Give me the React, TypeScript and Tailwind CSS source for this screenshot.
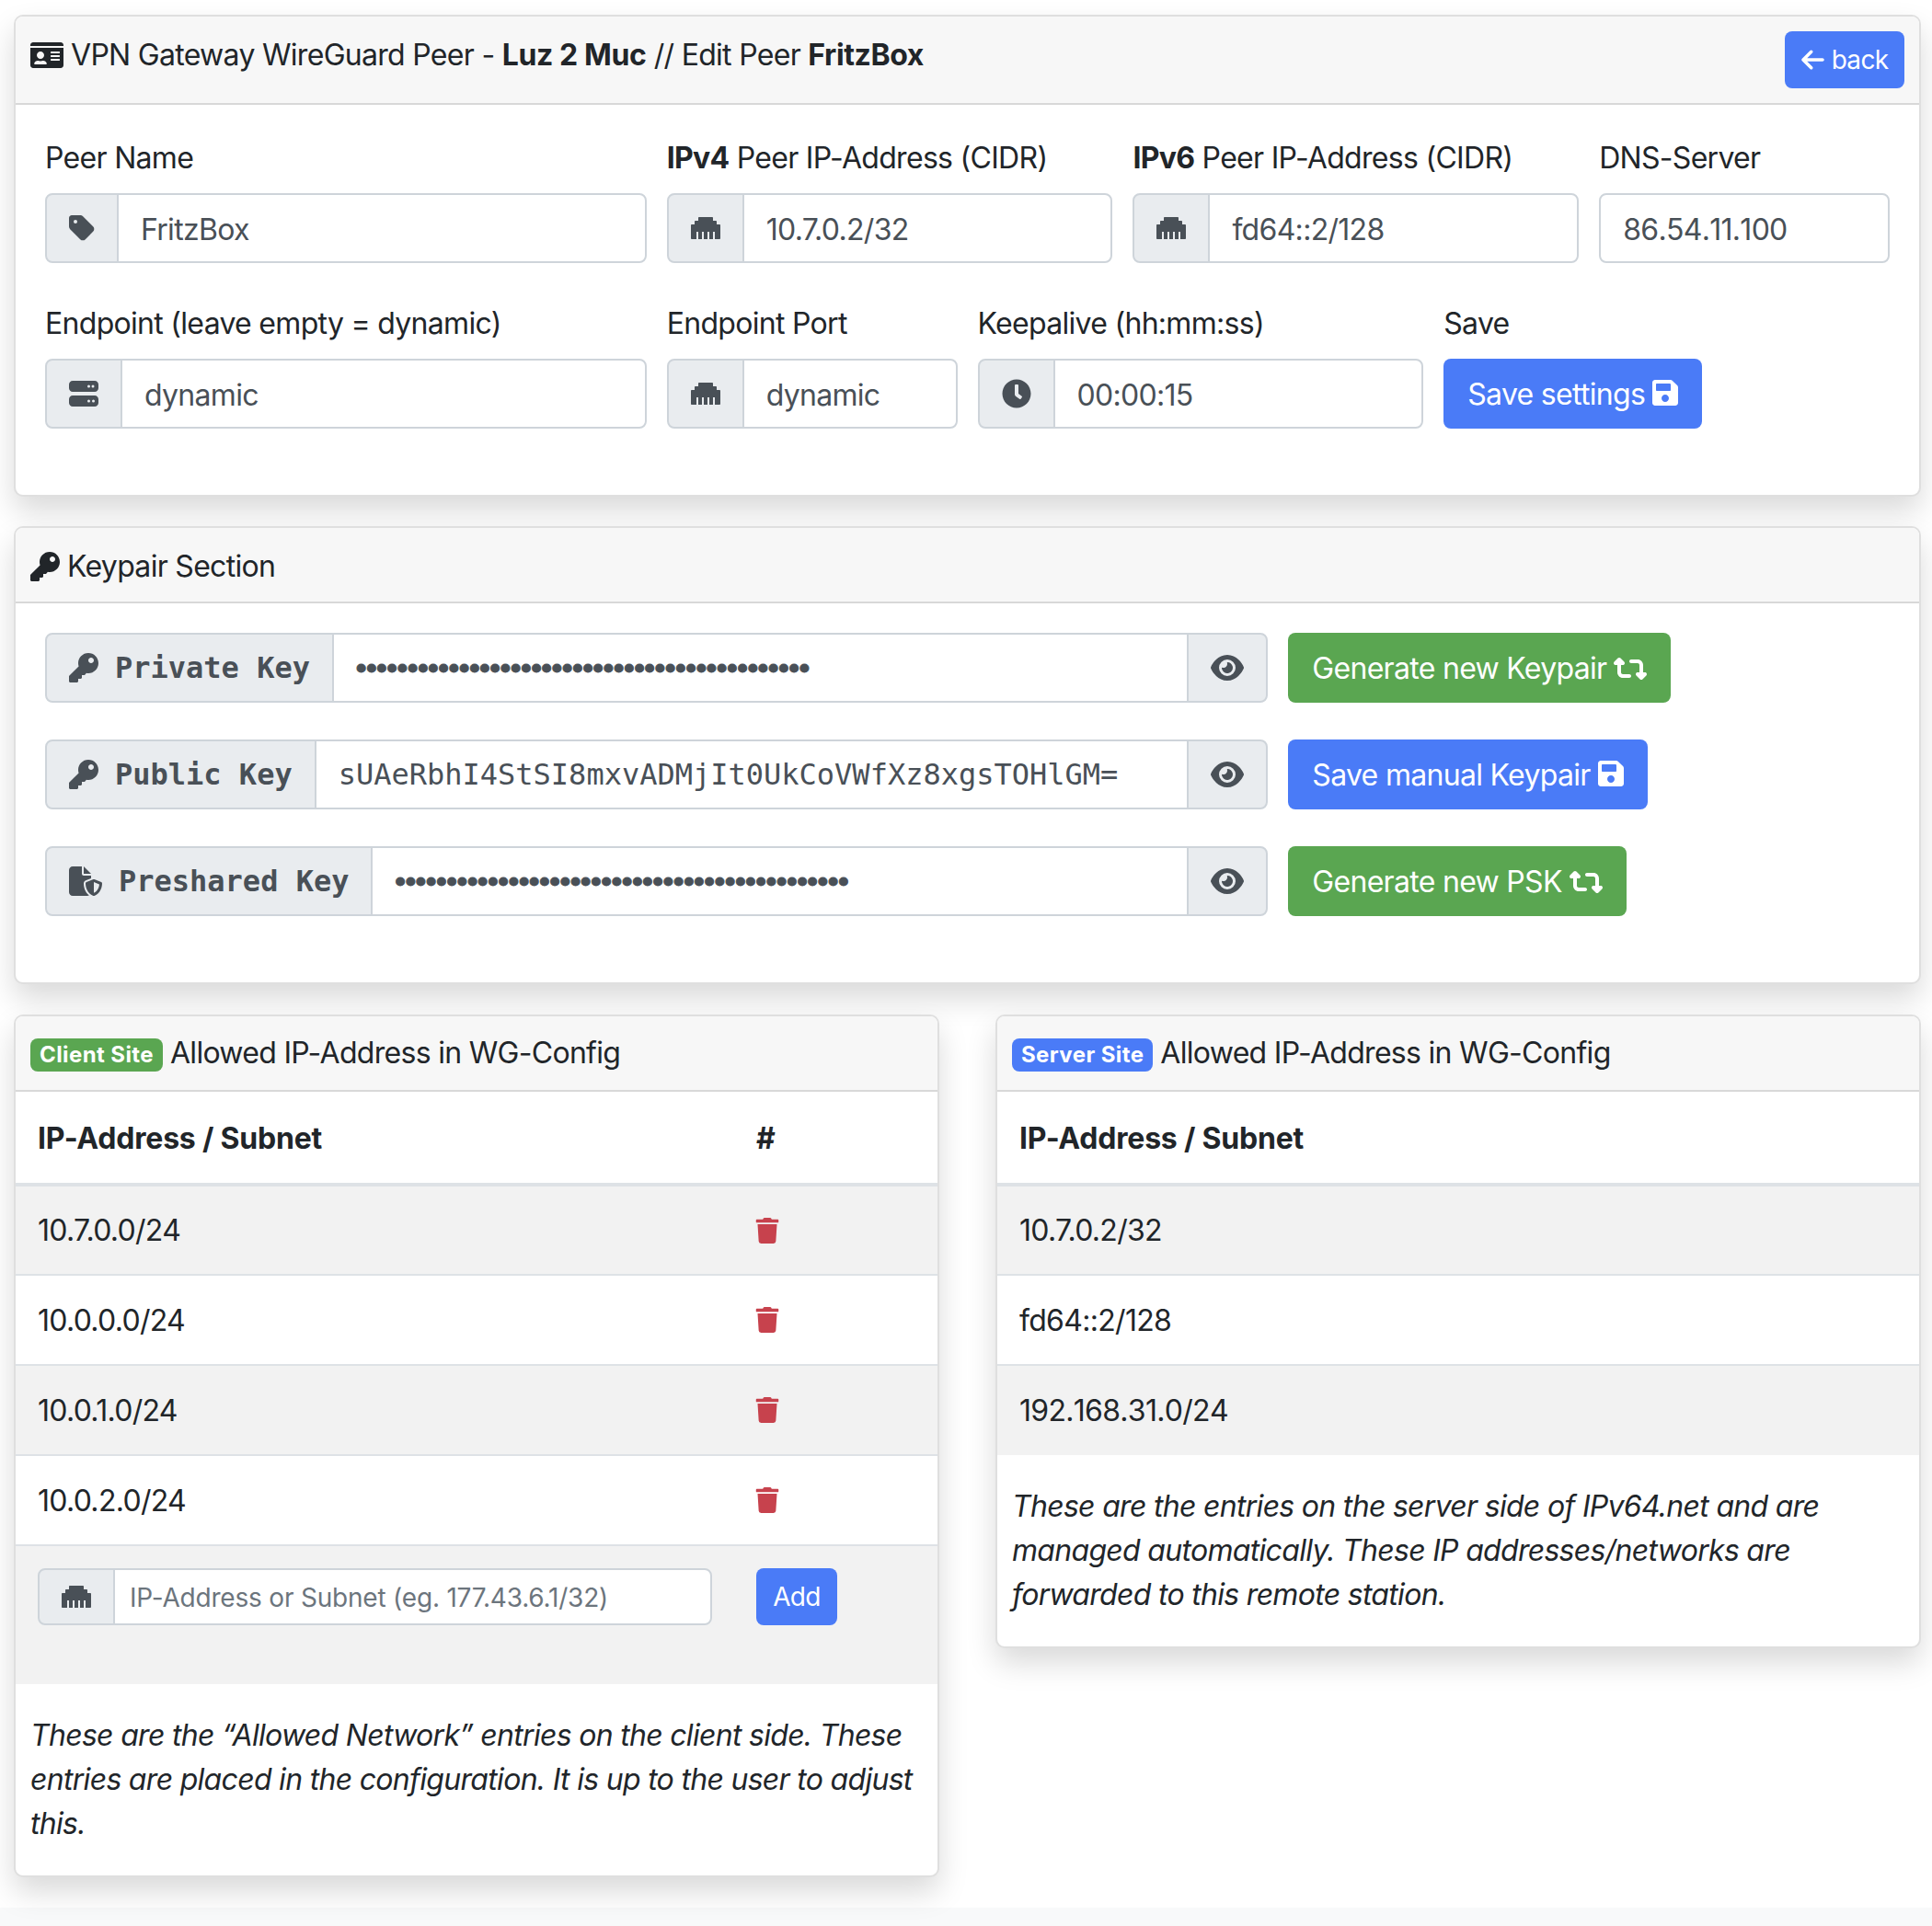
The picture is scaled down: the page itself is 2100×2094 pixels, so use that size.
import React from "react";
import { FaIdCard, FaEthernet, FaClock, FaSave, FaKey, FaTrash } from "react-icons/fa";
import { FaArrowLeft, FaEye, FaFileShield, FaRetweet, FaServer, FaTag } from "react-icons/fa6";

const MONO = "font-['DejaVu_Sans_Mono',monospace] tracking-normal";

function Card({ children, className = "" }: { children: React.ReactNode; className?: string }) {
    return (
        <div className={"bg-white border-2 border-black/[.125] rounded-[10px] shadow-[0_16px_32px_rgba(0,0,0,0.15)] overflow-hidden " + className}>
            {children}
        </div>
    );
}

function Header({ children, height = "" }: { children: React.ReactNode; height?: string }) {
    return (
        <div className={"bg-[#f7f7f7] border-b-2 border-black/[.125] px-4 py-4 flex justify-between items-start " + height}>
            {children}
        </div>
    );
}

function Label({ children }: { children: React.ReactNode }) {
    return <div className="mb-4 h-12 pt-0.5 text-[32px] leading-[48px] whitespace-nowrap">{children}</div>;
}

function Addon({ children, className = "" }: { children: React.ReactNode; className?: string }) {
    return (
        <div className={"shrink-0 flex items-center px-6 bg-[#e9ecef] border-2 border-[#ced4da] text-[#495057] " + className}>
            {children}
        </div>
    );
}

function Field({ icon, value, noKern = false }: { icon?: React.ReactNode; value: string; noKern?: boolean }) {
    return (
        <div className="flex h-[76px]">
            {icon && <Addon className="rounded-l-lg">{icon}</Addon>}
            <input
                readOnly
                value={value}
                className={"min-w-0 flex-1 bg-white border-2 border-[#ced4da] px-6 pt-1 text-[32px] text-[#495057] outline-none rounded-r-lg " + (icon ? "-ml-0.5 " : "rounded-l-lg ") + (noKern ? "[font-kerning:none]" : "")}
            />
        </div>
    );
}

function KeyRow({
    icon,
    label,
    value,
    masked = false,
    button,
    color,
    buttonIcon,
}: {
    icon: React.ReactNode;
    label: string;
    value: string;
    masked?: boolean;
    button: string;
    color: string;
    buttonIcon: React.ReactNode;
}) {
    return (
        <div className="grid grid-cols-12 gap-x-[22px] mb-10">
            <div className="col-span-8 flex h-[76px]">
                <Addon className="rounded-l-lg">
                    {icon}
                    <span className={MONO + " ml-[18px] text-[32px] font-bold whitespace-nowrap"}>{label}</span>
                </Addon>
                <input
                    readOnly
                    value={value}
                    className={
                        "min-w-0 flex-1 -ml-0.5 bg-white border-2 border-[#ced4da] px-6 text-[#495057] outline-none " +
                        (masked ? "text-[32px] tracking-normal font-bold [-webkit-text-stroke:1px_#495057] font-['Liberation_Sans',sans-serif]" : MONO + " text-[32px]")
                    }
                    type={masked ? "password" : "text"}
                />
                <Addon className="rounded-r-lg -ml-0.5">
                    <FaEye className="h-8 w-9" />
                </Addon>
            </div>
            <div className="col-span-4">
                <button className={"h-[76px] px-[26px] pt-0.5 rounded-lg text-white text-[32px] flex items-center gap-2 whitespace-nowrap " + color}>
                    {button} {buttonIcon}
                </button>
            </div>
        </div>
    );
}

function Note({ children }: { children: React.ReactNode }) {
    return <p className="px-4 py-8 italic text-[32px] leading-[48px]">{children}</p>;
}

const ETH = <FaEthernet size={32} />;
const clientRows = ["10.7.0.0/24", "10.0.0.0/24", "10.0.1.0/24", "10.0.2.0/24"];
const serverRows = ["10.7.0.2/32", "fd64::2/128", "192.168.31.0/24"];

export default function App() {
    return (
        <div className="bg-white text-[#212529] font-['Inter',sans-serif] tracking-[-0.7px] text-[32px] leading-[48px] min-h-[2094px]">
            <div className="pl-[15px] pr-[12px] pt-4">
                <Card className="mb-8">
                    <Header>
                        <div className="flex items-center gap-2 whitespace-nowrap pt-0.5">
                            <FaIdCard size={36} className="text-[#212529]" />
                            <span>
                                VPN Gateway WireGuard Peer - <b className="tracking-[-0.4px]">Luz 2 Muc</b> // Edit Peer <b className="tracking-[-0.4px]">FritzBox</b>
                            </span>
                        </div>
                        <button className="h-[62px] w-[130px] shrink-0 rounded-lg bg-[#4a7bf7] text-white text-[28px] flex items-center justify-center gap-2">
                            <FaArrowLeft className="h-7 w-[25px]" /> back
                        </button>
                    </Header>
                    <div className="px-8 pt-8 pb-8">
                        <div className="grid grid-cols-12 gap-x-[22px] mb-10">
                            <div className="col-span-4">
                                <Label>Peer Name</Label>
                                <Field icon={<FaTag className="h-8 w-7" />} value="FritzBox" />
                            </div>
                            <div className="col-span-3">
                                <Label><b>IPv4</b> Peer IP-Address (CIDR)</Label>
                                <Field icon={ETH} value="10.7.0.2/32" />
                            </div>
                            <div className="col-span-3">
                                <Label><b>IPv6</b> Peer IP-Address (CIDR)</Label>
                                <Field icon={ETH} value="fd64::2/128" />
                            </div>
                            <div className="col-span-2">
                                <Label>DNS-Server</Label>
                                <Field value="86.54.11.100" noKern />
                            </div>
                        </div>
                        <div className="grid grid-cols-12 gap-x-[22px] mb-10">
                            <div className="col-span-4">
                                <Label>Endpoint (leave empty = dynamic)</Label>
                                <Field icon={<FaServer size={32} />} value="dynamic" />
                            </div>
                            <div className="col-span-2">
                                <Label>Endpoint Port</Label>
                                <Field icon={ETH} value="dynamic" />
                            </div>
                            <div className="col-span-3">
                                <Label>Keepalive (hh:mm:ss)</Label>
                                <Field icon={<FaClock size={32} />} value="00:00:15" noKern />
                            </div>
                            <div className="col-span-3">
                                <Label>Save</Label>
                                <button className="h-[76px] px-[26px] pt-0.5 rounded-lg bg-[#4a7bf7] text-white text-[32px] flex items-center gap-2 whitespace-nowrap">
                                    Save settings <FaSave className="h-8 w-7 -mt-1" />
                                </button>
                            </div>
                        </div>
                    </div>
                </Card>

                <Card className="mb-[33px]">
                    <Header height="h-[82px]">
                        <div className="flex items-center gap-2 whitespace-nowrap pt-0.5">
                            <FaKey size={32} /> <span>Keypair Section</span>
                        </div>
                    </Header>
                    <div className="px-8 pt-8 pb-8">
                        <KeyRow
                            icon={<FaKey size={32} />}
                            label="Private Key"
                            value="00000000000000000000000000000000000000000000"
                            masked
                            button="Generate new Keypair"
                            color="bg-[#5aa651]"
                            buttonIcon={<FaRetweet className="h-8 w-9" />}
                        />
                        <KeyRow
                            icon={<FaKey size={32} />}
                            label="Public Key"
                            value="sUAeRbhI4StSI8mxvADMjIt0UkCoVWfXz8xgsTOHlGM="
                            button="Save manual Keypair"
                            color="bg-[#4a7bf7]"
                            buttonIcon={<FaSave className="h-8 w-7 -mt-1" />}
                        />
                        <KeyRow
                            icon={<FaFileShield className="h-8 w-9" />}
                            label="Preshared Key"
                            value="00000000000000000000000000000000000000000000"
                            masked
                            button="Generate new PSK"
                            color="bg-[#5aa651]"
                            buttonIcon={<FaRetweet className="h-8 w-9" />}
                        />
                    </div>
                </Card>

                <div className="grid grid-cols-2 gap-x-[61px] items-start pb-[33px]">
                    <Card>
                        <Header height="h-[82px]">
                            <div className="flex items-center gap-2 whitespace-nowrap">
                                <span className="bg-[#5aa651] text-white text-[24px] leading-[36px] font-bold tracking-[0.4px] px-2.5 rounded-lg mt-1">Client Site</span>
                                <span>Allowed IP-Address in WG-Config</span>
                            </div>
                        </Header>
                        <table className="w-full border-collapse">
                            <thead>
                                <tr className="h-[101px] border-b-4 border-[#dee2e6]">
                                    <th className="pl-6 pt-0.5 text-left font-bold tracking-[-0.2px] w-[781px]">IP-Address / Subnet</th>
                                    <th className="pl-6 pt-0.5 text-left font-bold">#</th>
                                </tr>
                            </thead>
                            <tbody>
                                {clientRows.map((ip, i) => (
                                    <tr key={ip} className={"h-[98px] border-b-2 border-[#dee2e6] " + (i % 2 === 0 ? "bg-[#f2f2f2]" : "")}>
                                        <td className="pl-6 pt-px">{ip}</td>
                                        <td className="pl-6">
                                            <FaTrash size={28} className="text-[#c7424d] -ml-0.5" />
                                        </td>
                                    </tr>
                                ))}
                                <tr className="bg-[#f2f2f2]">
                                    <td className="pl-6 pt-6 pb-16 align-top">
                                        <div className="flex h-[62px] w-[733px]">
                                            <Addon className="rounded-l-lg">{ETH}</Addon>
                                            <input
                                                readOnly
                                                placeholder="IP-Address or Subnet (eg. 177.43.6.1/32)"
                                                className="min-w-0 flex-1 -ml-0.5 bg-white border-2 border-[#ced4da] rounded-r-lg px-4 pt-0.5 text-[28px] tracking-[-0.2px] outline-none placeholder:text-[#6c757d]"
                                            />
                                        </div>
                                    </td>
                                    <td className="pl-6 pt-6 pb-16 align-top">
                                        <button className="h-[62px] w-[88px] rounded-lg bg-[#4a7bf7] text-white text-[28px]">Add</button>
                                    </td>
                                </tr>
                            </tbody>
                        </table>
                        <Note>These are the “Allowed Network” entries on the client side. These entries are placed in the configuration. It is up to the user to adjust this.</Note>
                    </Card>

                    <Card>
                        <Header height="h-[82px]">
                            <div className="flex items-center gap-2 whitespace-nowrap">
                                <span className="bg-[#4a7bf7] text-white text-[24px] leading-[36px] font-bold tracking-[0.4px] px-2.5 rounded-lg mt-1">Server Site</span>
                                <span>Allowed IP-Address in WG-Config</span>
                            </div>
                        </Header>
                        <table className="w-full border-collapse">
                            <thead>
                                <tr className="h-[101px] border-b-4 border-[#dee2e6]">
                                    <th className="pl-6 pt-0.5 text-left font-bold tracking-[-0.2px]">IP-Address / Subnet</th>
                                </tr>
                            </thead>
                            <tbody>
                                {serverRows.map((ip, i) => (
                                    <tr key={ip} className={"h-[98px] " + (i < 2 ? "border-b-2 border-[#dee2e6] " : "") + (i % 2 === 0 ? "bg-[#f2f2f2]" : "")}>
                                        <td className={"pl-6 pt-px " + (ip.startsWith("192") ? "[font-kerning:none]" : "")}>{ip}</td>
                                    </tr>
                                ))}
                            </tbody>
                        </table>
                        <Note>These are the entries on the server side of IPv64.net and are managed automatically. These IP addresses/networks are forwarded to this remote station.</Note>
                    </Card>
                </div>
            </div>
            <div className="h-[22px] bg-[#f8f9fa]" />
        </div>
    );
}
